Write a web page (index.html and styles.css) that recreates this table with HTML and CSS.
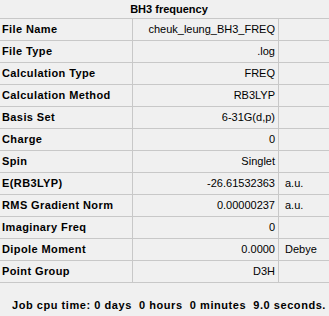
FILE: index.html
```html
<!DOCTYPE html>
<html>
<head>
<meta charset="utf-8">
<link rel="stylesheet" href="styles.css">
</head>
<body>
<div class="panel">
  <div class="title">BH3 frequency</div>
  <div class="grid">
    <div class="label">File Name</div><div class="value">cheuk_leung_BH3_FREQ</div><div class="unit"></div>
    <div class="label">File Type</div><div class="value">.log</div><div class="unit"></div>
    <div class="label">Calculation Type</div><div class="value">FREQ</div><div class="unit"></div>
    <div class="label">Calculation Method</div><div class="value">RB3LYP</div><div class="unit"></div>
    <div class="label">Basis Set</div><div class="value">6-31G(d,p)</div><div class="unit"></div>
    <div class="label">Charge</div><div class="value">0</div><div class="unit"></div>
    <div class="label">Spin</div><div class="value">Singlet</div><div class="unit"></div>
    <div class="label">E(RB3LYP)</div><div class="value">-26.61532363</div><div class="unit">a.u.</div>
    <div class="label">RMS Gradient Norm</div><div class="value">0.00000237</div><div class="unit">a.u.</div>
    <div class="label">Imaginary Freq</div><div class="value">0</div><div class="unit"></div>
    <div class="label">Dipole Moment</div><div class="value">0.0000</div><div class="unit">Debye</div>
    <div class="label">Point Group</div><div class="value">D3H</div><div class="unit"></div>
  </div>
  <div class="footer">Job cpu time: 0 days  0 hours  0 minutes  9.0 seconds.</div>
</div>
</body>
</html>
```

FILE: styles.css
```css
html, body {
  margin: 0;
  padding: 0;
  background: #f0f0f0;
}

.panel {
  width: 329px;
  font-family: "Liberation Sans", Arial, sans-serif;
  font-size: 11px;
  color: #000;
}

.title {
  height: 18px;
  line-height: 18px;
  text-align: center;
  font-weight: bold;
  padding-left: 9px;
  border-bottom: 1px solid #c8c8c8;
}

.grid {
  display: grid;
  grid-template-columns: 133px 146px 1fr;
  grid-auto-rows: 22px;
}

.grid > div {
  border-bottom: 1px solid #c8c8c8;
  line-height: 21px;
  white-space: nowrap;
}

.label {
  font-weight: bold;
  letter-spacing: 0.4px;
  padding-left: 2px;
  border-right: 1px solid #c8c8c8;
}

.value {
  text-align: right;
  padding-right: 3px;
  border-right: 1px solid #c8c8c8;
}

.unit {
  padding-left: 6px;
}

.footer {
  white-space: pre;
  font-weight: bold;
  letter-spacing: 0.55px;
  padding-left: 12px;
  line-height: 14px;
  margin-top: 15px;
}
```
